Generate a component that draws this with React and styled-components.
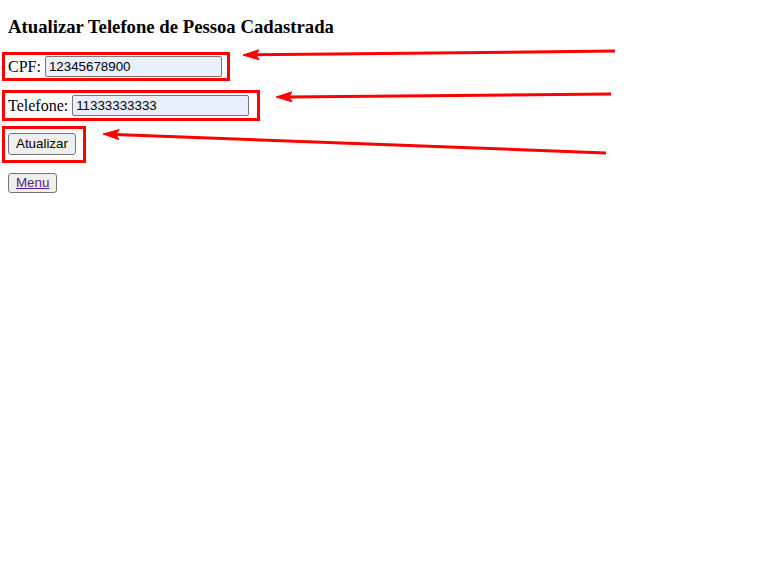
import React from "react";
import styled, { createGlobalStyle } from "styled-components";

const GlobalStyle = createGlobalStyle`
  html, body {
    margin: 0;
    padding: 0;
    background: #ffffff;
  }
  body {
    font-family: "Liberation Serif", "Times New Roman", serif;
    font-size: 16px;
    color: #000;
  }
`;

const Page = styled.div`
  position: relative;
  width: 760px;
  height: 575px;
  padding: 16px 0 0 2px;
  box-sizing: border-box;
  display: flex;
  flex-direction: column;
  align-items: flex-start;
`;

const Title = styled.h3`
  margin: 0 0 14px 6px;
  font-size: 18.72px;
  font-weight: bold;
  line-height: 21.5px;
`;

const Highlight = styled.div`
  border: 3px solid #ff0000;
  padding: ${(p) => p.$pad};
  margin-bottom: ${(p) => p.$after}px;
  display: flex;
  align-items: center;
  gap: 4px;
`;

const Label = styled.label`
  font-size: 16px;
  line-height: 19px;
`;

const Input = styled.input`
  width: ${(p) => p.$w}px;
  height: 21px;
  box-sizing: border-box;
  border: 1px solid #767676;
  border-radius: 2px;
  background: #e8f0fe;
  padding: 1px 3px;
  font-family: "Liberation Sans", Arial, sans-serif;
  font-size: 13.33px;
  color: #000;
  outline: none;
`;

const Button = styled.button`
  height: ${(p) => (p.$small ? 20 : 22)}px;
  box-sizing: border-box;
  padding: 1px 7px;
  border: 1px solid #767676;
  border-radius: 3px;
  background: #efefef;
  font-family: "Liberation Sans", Arial, sans-serif;
  font-size: 13.33px;
  color: #000;
  line-height: 1;
  cursor: pointer;
`;

const MenuWrap = styled.div`
  margin-left: 6px;
`;

const MenuLink = styled.a`
  color: #551a8b;
  text-decoration: underline;
`;

const Overlay = styled.svg`
  position: absolute;
  left: 0;
  top: 0;
  pointer-events: none;
`;

const Arrow = ({ x1, y1, x2, y2 }) => {
  const dx = x2 - x1;
  const dy = y2 - y1;
  const len = Math.hypot(dx, dy);
  const ux = dx / len;
  const uy = dy / len;
  const headLen = 16;
  const headW = 5;
  const bx = x2 - ux * headLen;
  const by = y2 - uy * headLen;
  const pts = [
    `${x2},${y2}`,
    `${bx - uy * headW},${by + ux * headW}`,
    `${bx + ux * 3},${by + uy * 3}`,
    `${bx + uy * headW},${by - ux * headW}`,
  ].join(" ");
  return (
    <g fill="#ff0000" stroke="#ff0000">
      <line x1={x1} y1={y1} x2={bx + ux * 4} y2={by + uy * 4} strokeWidth="3" />
      <polygon points={pts} strokeWidth="1" />
    </g>
  );
};

export default function App() {
  return (
    <>
      <GlobalStyle />
      <Page>
        <Title>Atualizar Telefone de Pessoa Cadastrada</Title>
        <Highlight $pad="1px 5px 1px 3px" $after={9}>
          <Label>CPF:</Label>
          <Input $w={177} defaultValue="12345678900" />
        </Highlight>
        <Highlight $pad="2px 8px 2px 3px" $after={5}>
          <Label>Telefone:</Label>
          <Input $w={177} defaultValue="11333333333" />
        </Highlight>
        <Highlight $pad="4px 7px 5px 3px" $after={10}>
          <Button>Atualizar</Button>
        </Highlight>
        <MenuWrap>
          <Button $small>
            <MenuLink>Menu</MenuLink>
          </Button>
        </MenuWrap>
        <Overlay width="760" height="575">
          <Arrow x1={615} y1={51} x2={243} y2={55} />
          <Arrow x1={611} y1={94} x2={276} y2={97} />
          <Arrow x1={606} y1={153} x2={103} y2={134} />
        </Overlay>
      </Page>
    </>
  );
}
